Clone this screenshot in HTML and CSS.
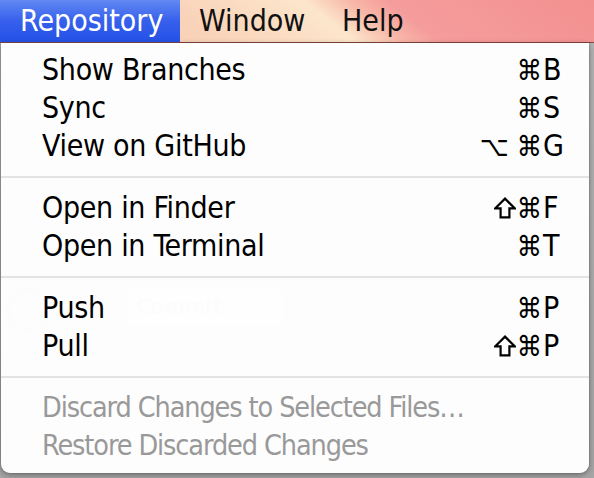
FILE: index.html
```html
<!DOCTYPE html>
<html>
<head>
<meta charset="utf-8">
<link rel="stylesheet" href="styles.css">
</head>
<body>
<div class="screen">
  <div class="menubar">
    <span class="mb-item active">Repository</span>
    <span class="mb-item window">Window</span>
    <span class="mb-item help">Help</span>
  </div>
  <div class="ghost">
    <div class="ghost-circle"></div>
    <div class="ghost-btn">Commit</div>
  </div>
  <div class="menu">
    <div class="item"><span class="label">Show Branches</span><span class="mods">⌘</span><span class="key">B</span></div>
    <div class="item"><span class="label">Sync</span><span class="mods">⌘</span><span class="key">S</span></div>
    <div class="item"><span class="label">View on GitHub</span><span class="mods">⌥ ⌘</span><span class="key">G</span></div>
    <div class="sep"></div>
    <div class="item"><span class="label">Open in Finder</span><span class="mods"><svg class="shift" viewBox="0 0 20 20"><polygon points="10,1.5 18.8,10.3 14,10.3 14,18.5 6,18.5 6,10.3 1.2,10.3"/></svg>⌘</span><span class="key">F</span></div>
    <div class="item"><span class="label">Open in Terminal</span><span class="mods">⌘</span><span class="key">T</span></div>
    <div class="sep"></div>
    <div class="item"><span class="label">Push</span><span class="mods">⌘</span><span class="key">P</span></div>
    <div class="item"><span class="label">Pull</span><span class="mods"><svg class="shift" viewBox="0 0 20 20"><polygon points="10,1.5 18.8,10.3 14,10.3 14,18.5 6,18.5 6,10.3 1.2,10.3"/></svg>⌘</span><span class="key">P</span></div>
    <div class="sep"></div>
    <div class="item disabled"><span class="label">Discard Changes to Selected Files…</span></div>
    <div class="item disabled"><span class="label">Restore Discarded Changes</span></div>
  </div>
</div>
</body>
</html>
```

FILE: styles.css
```css
html, body {
  margin: 0;
  padding: 0;
}
body {
  background: #ababab;
  font-family: "DejaVu Sans Condensed", "DejaVu Sans", sans-serif;
  font-stretch: condensed;
}
.screen {
  position: relative;
  width: 594px;
  height: 478px;
  overflow: hidden;
  background: linear-gradient(#b4b4b4, #a6a6a6);
}
.menubar {
  display: flex;
  height: 42px;
  border-bottom: 1px solid #8a4a44;
  background: linear-gradient(38deg, #f6c3aa 0%, #f9d4ba 35%, #fce6cb 55%, #f8b8a8 62%, #f59c9c 68%, #f49090 100%);
  font-size: 30px;
  line-height: 42px;
  color: #111;
}
.mb-item {
  padding: 0;
}
.mb-item.active {
  width: 160px;
  padding-left: 20px;
  background: linear-gradient(#6288f3, #3660ec 50%, #2452e6);
  color: #fff;
}
.mb-item.window {
  width: 143px;
  padding-left: 19px;
}
.mb-item.help {
  padding: 0;
}
.ghost {
  position: absolute;
  left: 0;
  top: 280px;
  width: 290px;
  height: 60px;
}
.ghost-circle {
  position: absolute;
  left: 6px;
  top: 8px;
  width: 36px;
  height: 36px;
  border-radius: 50%;
  border: 4px solid #8a8a8a;
}
.ghost-btn {
  position: absolute;
  left: 128px;
  top: 8px;
  width: 154px;
  height: 38px;
  border-radius: 4px;
  background: #bcbcbc;
  color: #8a8a8a;
  font-size: 22px;
  font-weight: bold;
  line-height: 38px;
  padding-left: 8px;
  box-sizing: border-box;
}
.menu {
  position: absolute;
  left: 1px;
  top: 43px;
  width: 588px;
  padding: 8px 0 8px;
  background: rgba(255, 255, 255, 0.975);
  border-radius: 0 0 9px 9px;
  box-shadow: 0 2px 6px rgba(0, 0, 0, 0.35), 0 0 0 1px rgba(0, 0, 0, 0.08);
  font-size: 30px;
}
.item {
  display: grid;
  grid-template-columns: 1fr auto 24px;
  align-items: baseline;
  height: 38px;
  line-height: 38px;
  padding: 0 22px 0 41px;
  color: #000;
  white-space: nowrap;
}
.item .label {
  letter-spacing: -0.3px;
}
.item .mods {
  text-align: right;
  font-size: 28px;
  padding-right: 1px;
}
.shift {
  width: 22px;
  height: 22px;
  margin-right: 1px;
  vertical-align: -1px;
  fill: none;
  stroke: #000;
  stroke-width: 2;
  stroke-linejoin: miter;
}
.item .key {
  text-align: left;
}
.item.disabled {
  color: #999;
  font-size: 28.5px;
}
.item.disabled .label {
  letter-spacing: -1.1px;
}
.sep {
  height: 2px;
  margin: 11px 0;
  background: #e3e3e3;
}
```
